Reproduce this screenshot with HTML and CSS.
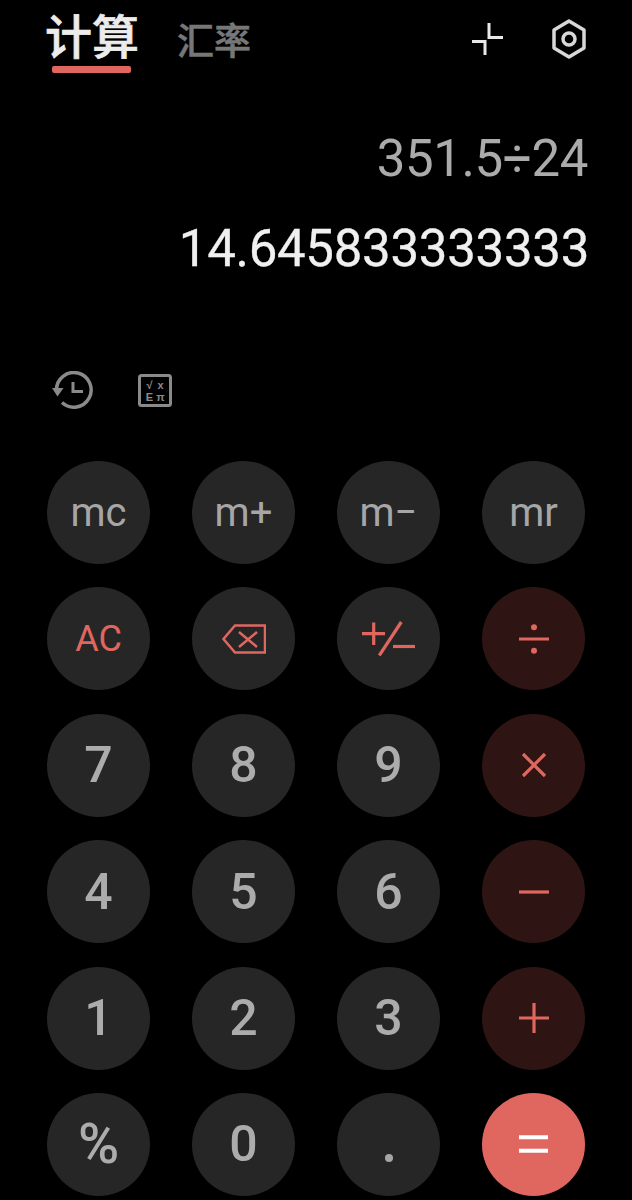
FILE: index.html
```html
<!DOCTYPE html>
<html lang="zh">
<head>
<meta charset="utf-8">
<title>计算器</title>
<link rel="stylesheet" href="styles.css">
</head>
<body>
<main class="app">
  <header class="top">
    <nav class="tabs">
      <div class="tab tab-active">计算<span class="underline"></span></div>
      <div class="tab tab-idle">汇率</div>
    </nav>
    <div class="top-icons">
      <svg width="34" height="34" viewBox="0 0 34 34" fill="none" stroke="#e8e8e8" stroke-width="3"><path d="M19 1V15.500H33"/><path d="M2 19.500H15V33"/></svg>
      <svg width="36" height="40" viewBox="0 0 36 40" fill="none" stroke="#d8d8d8" stroke-width="3.500"><path d="M18 2L33 11V29L18 38L3 29V11Z" stroke-linejoin="round"/><circle cx="18" cy="20" r="6"/></svg>
    </div>
  </header>
  <section class="display">
    <div class="expr">351.5÷24</div>
    <div class="result">14.645833333333</div>
  </section>
  <div class="tools">
    <svg width="42" height="38" viewBox="0 0 42 38" fill="none" stroke="#8a8a8a" stroke-width="3.500"><path d="M5.500 19A17.300 17.300 0 1 1 11 31.500"/><path d="M1 17H12.500L6.500 25.500Z" fill="#8a8a8a" stroke="none"/><path d="M22 11V20.500H32" stroke-width="3"/></svg>
    <svg width="34" height="33" viewBox="0 0 34 33"><rect x="1.500" y="1.500" width="31" height="30" rx="2" fill="none" stroke="#8a8a8a" stroke-width="3"/><text class="fx" x="11.500" y="14.500" text-anchor="middle">√</text><text class="fx" x="22.500" y="14.500" text-anchor="middle">x</text><text class="fx" x="11.500" y="27" text-anchor="middle">E</text><text class="fx" x="22.500" y="27" text-anchor="middle">π</text></svg>
  </div>
  <section class="keys">
    <div class="key">mc</div>
    <div class="key">m+</div>
    <div class="key">m−</div>
    <div class="key">mr</div>

    <div class="key key-red">AC</div>
    <div class="key"><svg width="44" height="30" viewBox="0 0 44 30" fill="none" stroke="#e0675f" stroke-width="2.500"><path d="M43 1.500H13L1.500 15L13 28.500H43Z"/><path d="M17 8L35 23M35 8L17 23"/></svg></div>
    <div class="key"><svg width="53" height="35" viewBox="0 0 53 35" fill="none" stroke="#e0675f" stroke-width="3.200"><path d="M0 12.700H23M11.700 1.500V24"/><path d="M39.300 1L17.300 34.500"/><path d="M31 25.500H53"/></svg></div>
    <div class="key key-op"><svg width="30" height="30" viewBox="0 0 30 30"><circle cx="15" cy="3.300" r="3" fill="#e0675f"/><circle cx="15" cy="26.700" r="3" fill="#e0675f"/><path d="M0 15H30" stroke="#e0675f" stroke-width="3"/></svg></div>

    <div class="key num">7</div>
    <div class="key num">8</div>
    <div class="key num">9</div>
    <div class="key key-op"><svg width="26" height="26" viewBox="0 0 26 26" stroke="#e0675f" stroke-width="3.200"><path d="M2 2L24 24M24 2L2 24"/></svg></div>

    <div class="key num">4</div>
    <div class="key num">5</div>
    <div class="key num">6</div>
    <div class="key key-op"><svg width="30" height="4" viewBox="0 0 30 4" stroke="#e0675f" stroke-width="3.200"><path d="M0 2H30"/></svg></div>

    <div class="key num">1</div>
    <div class="key num">2</div>
    <div class="key num">3</div>
    <div class="key key-op"><svg width="30" height="30" viewBox="0 0 30 30" stroke="#e0675f" stroke-width="3.200"><path d="M0 15H30M15 0V30"/></svg></div>

    <div class="key num pct">%</div>
    <div class="key num">0</div>
    <div class="key dot"><span class="dot-mark"></span></div>
    <div class="key key-eq"><svg width="29" height="18" viewBox="0 0 29 18" stroke="#fff" stroke-width="4"><path d="M0 2.300H29M0 15.700H29"/></svg></div>
  </section>
</main>
</body>
</html>
```
FILE: styles.css
```css
* { box-sizing: border-box; }
html, body { margin: 0; background: #000; }
body { width: 632px; height: 1200px; overflow: hidden; font-family: Roboto, "Noto Sans CJK SC", sans-serif; }
.app { display: flex; flex-direction: column; height: 1200px; }

.top { display: flex; justify-content: space-between; align-items: flex-start; padding: 7px 45px 0 45px; height: 126px; }
.tabs { display: flex; align-items: flex-start; gap: 40px; }
.tab { font-family: "Noto Sans CJK SC", sans-serif; }
.tab-active { position: relative; font-size: 47px; line-height: 54px; font-weight: 500; color: #ececec; width: 92px; white-space: nowrap; -webkit-text-stroke: 0.7px #ececec; }
.underline { position: absolute; left: 7px; top: 59px; width: 79px; height: 7px; border-radius: 2px; background: #e0675f; }
.tab-idle { font-size: 37px; line-height: 54px; font-weight: 500; color: #777; padding-top: 5px; -webkit-text-stroke: 0.6px #777; }
.top-icons { display: flex; align-items: center; gap: 47px; padding-top: 12px; }

.display { display: flex; flex-direction: column; align-items: flex-end; padding-right: 44px; height: 245px; padding-top: 1px; }
.expr { font-size: 51px; line-height: 64px; color: #ababab; letter-spacing: -0.4px; }
.result { font-size: 51px; line-height: 64px; color: #f0f0f0; margin-top: 26px; letter-spacing: -0.3px; margin-right: -1px; -webkit-text-stroke: 0.3px #f0f0f0; }

.tools { display: flex; align-items: center; gap: 45px; padding-left: 51px; height: 38px; }
.fx { font-family: "Liberation Sans", sans-serif; font-size: 11px; font-weight: 700; fill: #8a8a8a; }

.keys { display: grid; grid-template-columns: repeat(4, 103px); grid-auto-rows: 103px; column-gap: 42px; row-gap: 23.400px; padding: 0 0 0 47px; margin-top: 52px; }
.key { display: flex; align-items: center; justify-content: center; border-radius: 50%; background: #262626; color: #a6a6a6; font-size: 40px; }
.key-red { color: #e0675f; font-size: 36px; }
.num { font-size: 50px; font-weight: 500; color: #acacac; }
.pct { font-size: 56px; font-weight: 500; }
.key-op { background: #2e1513; }
.key-eq { background: #e0675f; }
.dot { align-items: flex-end; padding-bottom: 34px; }
.dot-mark { width: 8px; height: 8px; border-radius: 50%; background: #a6a6a6; }
```
